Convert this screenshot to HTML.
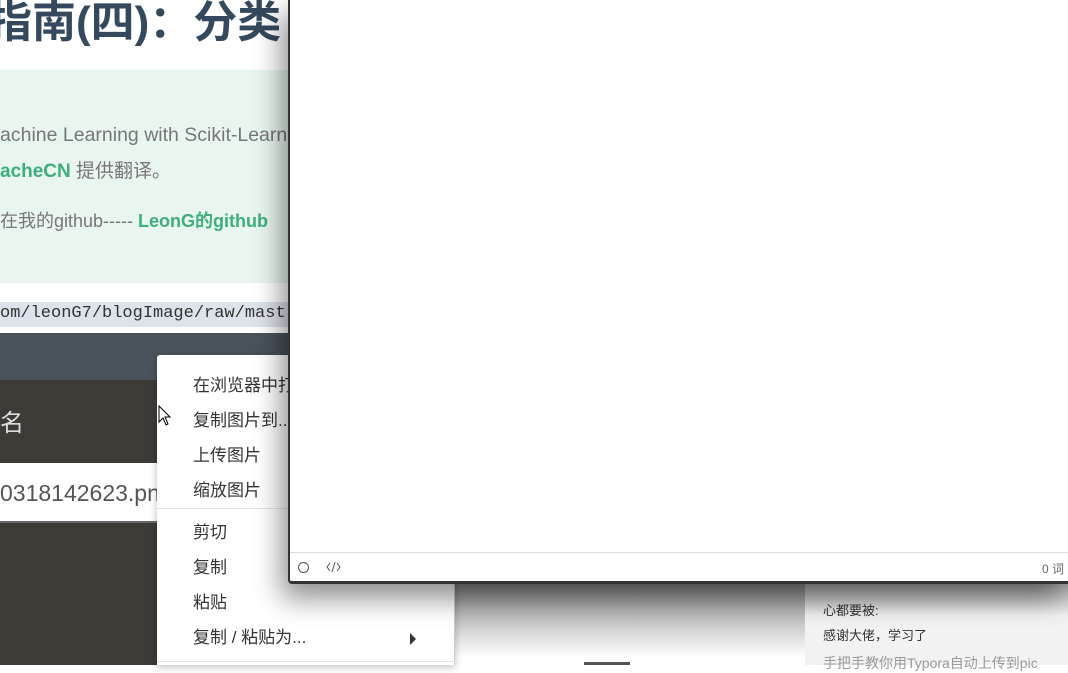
<!DOCTYPE html>
<html><head><meta charset="utf-8"><style>
*{margin:0;padding:0;box-sizing:border-box}
body{width:1068px;height:665px;overflow:hidden;position:relative;background:#fff;font-family:"Liberation Sans","Noto Sans CJK SC",sans-serif}
.a{position:absolute}
</style></head><body>
<div class="a" style="left:-12px;top:-14px;font-size:44px;font-weight:bold;color:#34495e;white-space:nowrap">指南(四)：分类</div>
<div class="a" style="left:0;top:70px;width:300px;height:213px;background:#e9f6ef"></div>
<div class="a" style="left:0;top:124px;font-size:19.5px;color:#777;white-space:nowrap">achine Learning with Scikit-Learn</div>
<div class="a" style="left:0;top:156px;font-size:19px;color:#777;white-space:nowrap"><b style="color:#3eaf7c">acheCN</b> 提供翻译。</div>
<div class="a" style="left:0;top:207px;font-size:18px;color:#777;white-space:nowrap">在我的github----- <b style="color:#3eaf7c">LeonG的github</b></div>
<div class="a" style="left:0;top:302px;width:300px;height:25px;background:#dde3ea"></div>
<div class="a" style="left:0;top:304px;font-family:'Liberation Mono',monospace;font-size:17px;color:#333;white-space:nowrap">om/leonG7/blogImage/raw/mast</div>
<div class="a" style="left:0;top:333px;width:300px;height:47px;background:#4a535b"></div>
<div class="a" style="left:0;top:380px;width:300px;height:285px;background:#3e3b37"></div>
<div class="a" style="left:0;top:403px;font-size:24px;color:#ddd">名</div>
<div class="a" style="left:0;top:463px;width:160px;height:60px;background:#fff;border-bottom:2px solid #666"></div>
<div class="a" style="left:0;top:480px;font-size:23px;color:#555;white-space:nowrap">0318142623.pn</div>
<div class="a" style="left:455px;top:583px;width:350px;height:82px;background:linear-gradient(#888,#fff 90%)"></div>
<div class="a" style="left:805px;top:583px;width:263px;height:82px;background:linear-gradient(#aaa,#f2f2f2 40%)"></div>
<div class="a" style="left:823px;top:600px;font-size:13px;color:#333">心都要被:</div>
<div class="a" style="left:823px;top:625px;font-size:13px;color:#333">感谢大佬，学习了</div>
<div class="a" style="left:823px;top:653px;font-size:14px;color:#999;white-space:nowrap">手把手教你用Typora自动上传到pic</div>
<div class="a" style="left:584px;top:662px;width:46px;height:3px;background:#555"></div>
<div class="a" style="left:157px;top:355px;width:298px;height:310px;background:#fff;border-right:1px solid #ccc;border-radius:3px 0 0 0;box-shadow:0 2px 8px rgba(0,0,0,.25)"></div>
<div class="a" style="left:193px;top:368px;font-size:17px;color:#333;line-height:35px">在浏览器中打<br>复制图片到...<br>上传图片<br>缩放图片</div>
<div class="a" style="left:157px;top:508px;width:298px;height:1px;background:#e5e5e5"></div>
<div class="a" style="left:193px;top:515px;font-size:17px;color:#333;line-height:35px">剪切<br>复制<br>粘贴<br>复制 / 粘贴为...</div>
<div class="a" style="left:410px;top:633px;width:0;height:0;border-left:6px solid #333;border-top:6px solid transparent;border-bottom:6px solid transparent"></div>
<div class="a" style="left:157px;top:661px;width:298px;height:1px;background:#e5e5e5"></div>
<svg class="a" style="left:158px;top:405px" width="14" height="22" viewBox="0 0 14 22"><path d="M1 1 L1 17 L5 13 L8 20 L10 19 L7 12 L12 12 Z" fill="#fff" stroke="#000"/></svg>
<div class="a" style="left:288px;top:0;width:780px;height:584px;background:#fff;border-left:2px solid #333;border-bottom:3px solid #333;border-bottom-left-radius:4px;box-shadow:-6px 14px 28px rgba(0,0,0,.45)"></div>
<div class="a" style="left:290px;top:552px;width:778px;height:1px;background:#ddd"></div>
<div class="a" style="left:298px;top:562px;width:11px;height:11px;border:1px solid #555;border-radius:50%"></div>
<svg class="a" style="left:326px;top:561px" width="15" height="12" viewBox="0 0 15 12"><path d="M4 2 L1 6 L4 10 M11 2 L14 6 L11 10 M9 1 L6 11" fill="none" stroke="#555" stroke-width="1"/></svg>
<div class="a" style="left:1042px;top:560px;font-size:12px;color:#666;white-space:nowrap">0 词</div>
</body></html>
